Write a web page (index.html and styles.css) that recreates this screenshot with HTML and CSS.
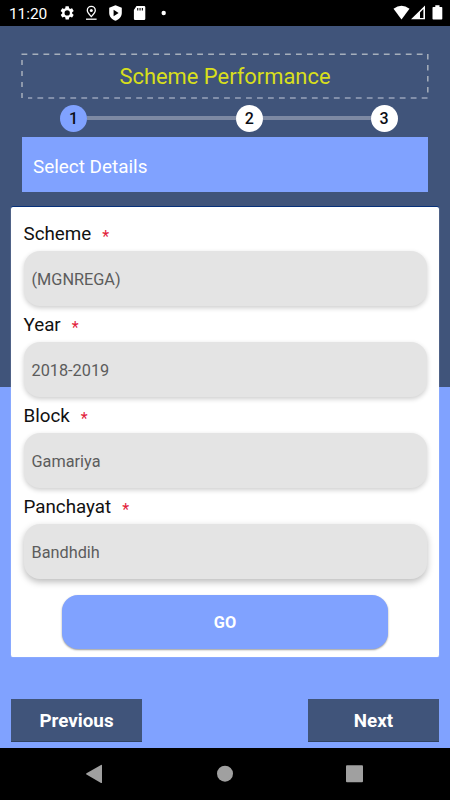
FILE: index.html
```html
<!DOCTYPE html>
<html lang="en">
<head>
<meta charset="utf-8">
<title>Scheme Performance</title>
<link rel="stylesheet" href="styles.css">
</head>
<body>
<header class="status">
  <span class="time">11:20</span>
  <svg class="status-icons" width="112" height="26" viewBox="0 0 112 26" fill="#fff">
    <g transform="translate(1.3 5) scale(.66)"><path d="M19.4 13c0-.3.1-.6.1-1s0-.7-.1-1l2.1-1.6c.2-.2.2-.4.1-.6l-2-3.500c-.1-.2-.4-.3-.6-.2l-2.500 1c-.5-.4-1.100-.7-1.700-1l-.4-2.600c0-.3-.2-.5-.5-.5h-4c-.2 0-.5.2-.5.400l-.4 2.700c-.6.200-1.100.600-1.700 1l-2.500-1c-.2-.1-.5 0-.6.200l-2 3.500c-.1.200-.1.500.1.600L4.500 11c0 .3-.1.700-.1 1s0 .7.1 1l-2.100 1.600c-.2.200-.2.400-.1.600l2 3.500c.1.200.4.300.6.200l2.500-1c.5.400 1.100.7 1.700 1l.4 2.600c0 .3.300.5.500.5h4c.3 0 .5-.2.5-.4l.4-2.700c.6-.2 1.200-.6 1.700-1l2.500 1c.2.100.5 0 .6-.2l2-3.500c.1-.2.100-.5-.1-.6zM12 16a4 4 0 1 1 0-8 4 4 0 0 1 0 8z"/></g>
    <g fill="none" stroke="#fff" stroke-width="1.300"><path d="M33.300 16.600c-2.700-2.900-4-4.600-4-6.200a4 4 0 0 1 8 0c0 1.600-1.300 3.300-4 6.200z"/><path d="M28 19.200h10.600"/></g><circle cx="33.300" cy="10.500" r="1.500"/>
    <path fill-rule="evenodd" d="M57.500 5.200l6.300 2.500v5.200c0 3.700-2.700 6.500-6.300 7.900-3.600-1.400-6.300-4.200-6.300-7.900V7.700zM55.600 9.700v6.600l5-3.300z"/>
    <path transform="translate(-1.500 0)" fill-rule="evenodd" d="M80 6h7.600q1.200 0 1.200 1.200v11.500q0 1.200-1.200 1.200h-9q-1.200 0-1.200-1.200V10zM80.700 8v2.500h1.100V8zm2.300 0v2.500h1.100V8zm2.300 0v2.500h1.100V8z"/>
    <circle cx="105.700" cy="13" r="2.200"/>
  </svg>
  <svg class="signal" width="52" height="26" viewBox="0 0 52 26" fill="#fff">
    <path d="M2.500 8.800Q10.500 2.500 18.500 8.800L10.500 19.400z"/>
    <path fill-rule="evenodd" d="M20 19.300L34 5.500v13.800zM29 12.500v5.500h3.400V9z"/>
    <path d="M42.300 7h2V5.300h4.200V7h2q.8 0 .8.800v11q0 .8-.8.800h-8.200q-.8 0-.8-.8v-11q0-.8.800-.8z"/>
  </svg>
</header>
<main>
  <h1 class="title">
    <svg class="dashes" width="408" height="46" fill="none" stroke="#a6afbc" stroke-width="1.500">
      <path d="M.5 1.200H406" stroke-dasharray="5.800 5.180"/>
      <path d="M406.800 1V44" stroke-dasharray="5.500 5.500"/>
      <path d="M406.500 45H7" stroke="#c3cad9" stroke-width="1.200" stroke-dasharray="5.800 5.180"/>
      <path d="M1 45V1" stroke-dasharray="5 6"/>
    </svg>
    Scheme Performance
  </h1>
  <div class="stepper">
    <span class="step active">1</span><i class="line long"></i><span class="step">2</span><i class="line"></i><span class="step">3</span>
  </div>
  <h2 class="banner">Select Details</h2>
  <section class="card">
    <div class="label">Scheme<span>*</span></div>
    <div class="field">(MGNREGA)</div>
    <div class="label">Year<span>*</span></div>
    <div class="field">2018-2019</div>
    <div class="label">Block<span>*</span></div>
    <div class="field">Gamariya</div>
    <div class="label">Panchayat<span>*</span></div>
    <div class="field last">Bandhdih</div>
    <button class="go">GO</button>
  </section>
  <div class="actions"><button>Previous</button><button>Next</button></div>
</main>
<nav class="navbar">
  <svg width="450" height="52" fill="#a0a0a0"><path d="M86.500 25.300L101 17q1-.5 1 .6v16.800q0 1.100-1 .5L86.500 26.600q-1-.6 0-1.300z"/><circle cx="225" cy="25.700" r="8"/><rect x="346" y="17.300" width="17" height="17" rx="1"/></svg>
</nav>
</body>
</html>
```
FILE: styles.css
```css
* { box-sizing: border-box; }
body {
  margin: 0;
  width: 450px;
  height: 800px;
  overflow: hidden;
  display: flex;
  flex-direction: column;
  font-family: Roboto, sans-serif;
  background: #000;
}
h1, h2 { margin: 0; font-weight: 400; }
button { border: 0; padding: 0; font-family: inherit; color: #fff; }
.status {
  height: 26px;
  flex: none;
  display: flex;
  align-items: center;
  padding: 0 7px 0 9px;
  color: #fff;
}
.time { width: 49px; font-size: 15.5px; line-height: 28px; padding-top: 1px; letter-spacing: -.1px; }
.signal { margin-left: auto; }
main {
  height: 722px;
  flex: none;
  padding: 27px 11px 0;
  background: linear-gradient(#40547a 360.5px, #80a2ff 360.5px);
}
.title {
  position: relative;
  height: 45px;
  margin: 0 11px;
  line-height: 47px;
  text-align: center;
  font-size: 21.9px;
  color: #d8df1c;
}
.dashes { position: absolute; left: -1px; top: 0; }
.stepper {
  display: flex;
  align-items: center;
  height: 27px;
  margin: 6.5px 41.5px 0 49px;
}
.step {
  width: 27px;
  height: 27px;
  flex: none;
  border-radius: 50%;
  background: #fff;
  color: #0b0d14;
  font-size: 16px;
  font-weight: 500;
  line-height: 28px;
  text-align: center;
}
.step.active { background: #80a2ff; }
.line { height: 4px; flex: 108; background: #7d89a3; }
.line.long { flex: 149; }
.banner {
  height: 55px;
  margin: 5px 11px 0;
  padding-left: 11px;
  line-height: 60px;
  font-size: 18.9px;
  color: #fff;
  background: #80a2ff;
}
.card {
  height: 450px;
  margin-top: 15.5px;
  padding: 8px 12px 0 12.5px;
  border-radius: 2px;
  background: #fff;
  box-shadow: 0 -1px 0 #07317a, 0 0 1px #dce5ff;
}
.label {
  height: 36px;
  line-height: 38px;
  font-size: 18.8px;
  color: #111;
}
.label span { margin-left: 11px; font-size: 16px; color: #e2203a; position: relative; top: 2px; }
.field {
  height: 55px;
  padding-left: 8px;
  border-radius: 16px;
  background: #e4e4e4;
  color: #5c5c5c;
  font-size: 16.3px;
  line-height: 57px;
  box-shadow: 0 2px 5px rgba(0,0,0,.2);
}
.field.last { box-shadow: 0 3px 7px rgba(0,0,0,.27); }
.label + .field { margin-bottom: -.1px; }
.go {
  display: block;
  width: 326px;
  height: 54px;
  margin: 16px 0 0 38.5px;
  padding-top: 2px;
  border-radius: 16px;
  background: #80a2ff;
  font-size: 16.3px;
  font-weight: 700;
  box-shadow: 0 1px 2px rgba(0,0,0,.4);
}
.actions { display: flex; justify-content: space-between; margin-top: 41.5px; }
.actions button {
  width: 131px;
  height: 43.5px;
  background: #40547a;
  font-size: 18.8px;
  font-weight: 700;
  padding-top: 2px;
  box-shadow: inset 0 -1px #304260;
}
.navbar { height: 52px; flex: none; }
.navbar svg { display: block; }
```
